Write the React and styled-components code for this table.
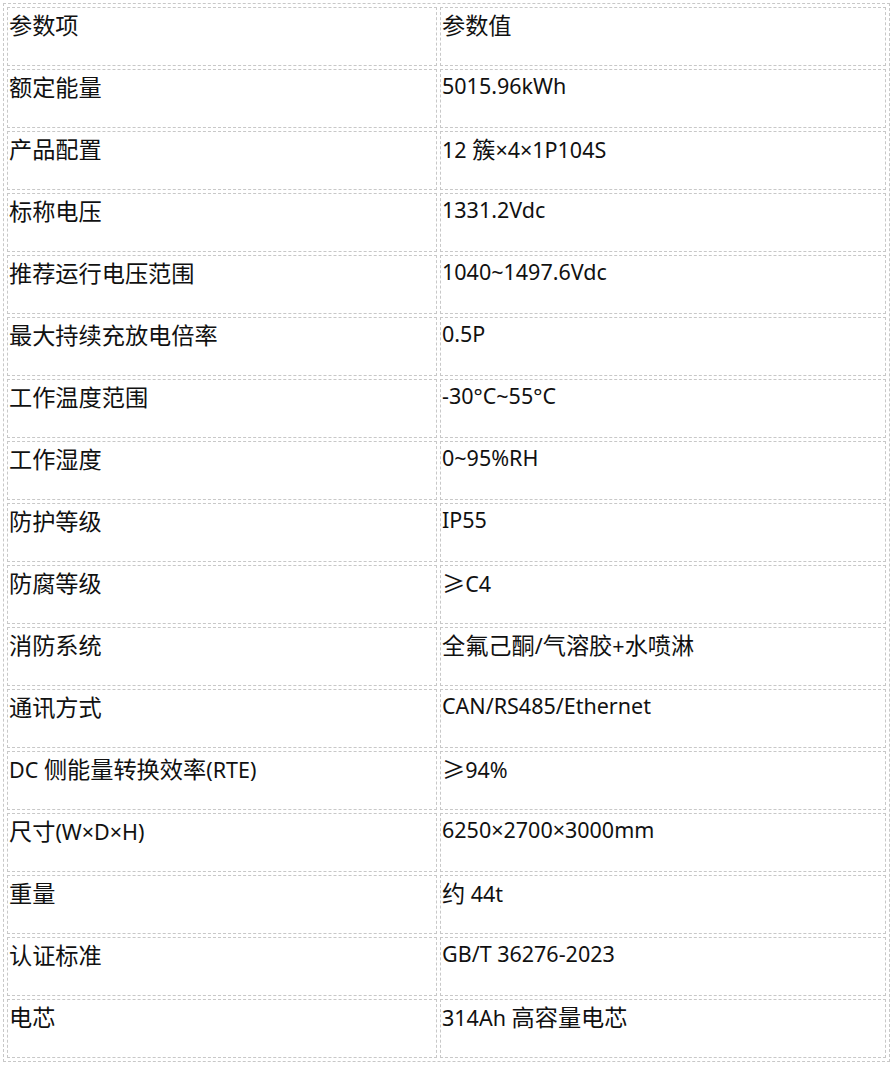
import React from "react";
import styled, { createGlobalStyle } from "styled-components";

const Global = createGlobalStyle`
  html, body { margin: 0; padding: 0; background: #fff; }
  body { font-family: "Noto Sans", "Noto Sans CJK SC", sans-serif; }
`;

const Table = styled.table`
  margin: 3px;
  width: 887px;
  border-collapse: separate;
  border-spacing: 3px;
  border: 1px dashed #c8c8c8;
  box-sizing: border-box;
  color: #111;
  font-size: 21.5px;
`;

const Cell = styled.td`
  box-sizing: border-box;
  width: ${(p) => (p.$first ? "430px" : "446px")};
  height: 59px;
  border: 1px dashed #c8c8c8;
  padding: 0 1px;
  vertical-align: top;
  line-height: 32px;
  white-space: nowrap;
`;

const Han = styled.span`
  font-family: "Noto Sans CJK SC", sans-serif;
  font-size: 23.2px;
`;

const rows = [
  ["参数项", "参数值"],
  ["额定能量", "5015.96kWh"],
  ["产品配置", "12 簇×4×1P104S"],
  ["标称电压", "1331.2Vdc"],
  ["推荐运行电压范围", "1040~1497.6Vdc"],
  ["最大持续充放电倍率", "0.5P"],
  ["工作温度范围", "-30°C~55°C"],
  ["工作湿度", "0~95%RH"],
  ["防护等级", "IP55"],
  ["防腐等级", "≥C4"],
  ["消防系统", "全氟己酮/气溶胶+水喷淋"],
  ["通讯方式", "CAN/RS485/Ethernet"],
  ["DC 侧能量转换效率(RTE)", "≥94%"],
  ["尺寸(W×D×H)", "6250×2700×3000mm"],
  ["重量", "约 44t"],
  ["认证标准", "GB/T 36276-2023"],
  ["电芯", "314Ah 高容量电芯"],
];

const hanRe = /([\u4e00-\u9fff\u2265]+)/;

function Text({ value }) {
  return value
    .split(hanRe)
    .filter(Boolean)
    .map((part, i) => (hanRe.test(part) ? <Han key={i}>{part}</Han> : part));
}

export default function App() {
  return (
    <>
      <Global />
      <Table>
        <tbody>
          {rows.map(([k, v]) => (
            <tr key={k}>
              <Cell $first>
                <Text value={k} />
              </Cell>
              <Cell>
                <Text value={v} />
              </Cell>
            </tr>
          ))}
        </tbody>
      </Table>
    </>
  );
}
